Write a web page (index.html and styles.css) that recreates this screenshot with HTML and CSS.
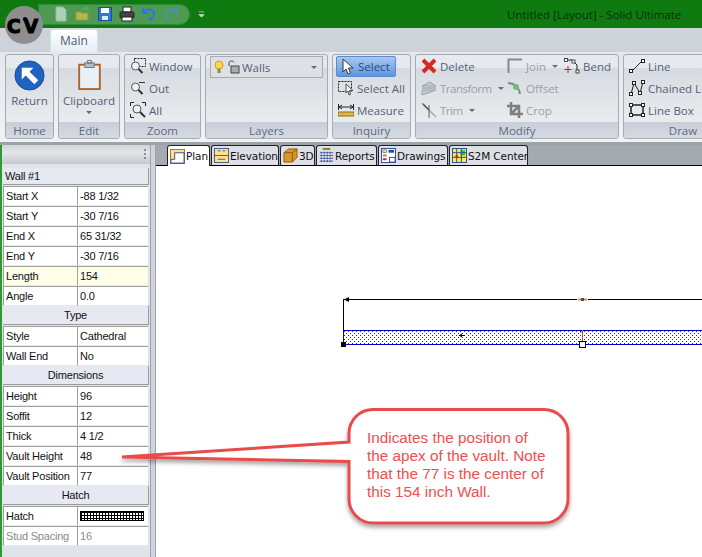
FILE: index.html
```html
<!DOCTYPE html>
<html lang="en">
<head>
    <meta charset="UTF-8">
    <meta name="viewport" content="width=device-width, initial-scale=1.0">
    <title>Untitled [Layout] - Solid Ultimate</title>
    <link rel="stylesheet" href="styles.css">
</head>
<body>
<div class="app">
    <div class="titlebar">
        <div class="logo"><span class="logo-text">CV</span><span class="logo-dot"></span></div>
        <div class="qat">
            <svg class="qat-icon" viewBox="0 0 16 16"><path d="M3 1h7l3 3v11H3z" fill="#a9d3b4" stroke="#8fbf9e"/></svg>
            <svg class="qat-icon" viewBox="0 0 16 16"><path d="M1 14V6h5l1 1h6v7z" fill="#b3b84e" stroke="#8f9a3a"/><path d="M7 5c1-2 3-3 5-3M10 0l3 2-3 2" fill="none" stroke="#4fae5c" stroke-width="1.5"/></svg>
            <svg class="qat-icon" viewBox="0 0 16 16"><rect x="1.500" y="1.500" width="13" height="13" fill="#2c78d8" stroke="#1c4f9c"/><rect x="4" y="2" width="8" height="5" fill="#fff"/><rect x="5" y="10" width="6" height="4" fill="#dfe8f4"/></svg>
            <svg class="qat-icon" viewBox="0 0 16 16"><rect x="4" y="1" width="8" height="5" fill="#fff" stroke="#222"/><rect x="1" y="6" width="14" height="6" rx="1" fill="#444" stroke="#222"/><rect x="3" y="11" width="10" height="4" fill="#fff" stroke="#222"/></svg>
            <svg class="qat-icon" viewBox="0 0 16 16"><path d="M2 2v5h5M3 6c3-4 10-3 10 2 0 3-2 5-5 6" fill="none" stroke="#2a78d8" stroke-width="2.200"/></svg>
            <svg class="qat-icon" viewBox="0 0 16 16"><path d="M14 2v5H9M13 6C10 2 3 3 3 8c0 3 2 5 5 6" fill="none" stroke="#4b93a8" stroke-width="2.200"/></svg>
        </div>
        <svg class="qat-more" viewBox="0 0 8 8"><path d="M1 1h6M1 4h6L4 7z" fill="#cfd6cf" stroke="#cfd6cf" stroke-width=".8"/></svg>
        <div class="title-text">Untitled [Layout] - Solid Ultimate</div>
    </div>

    <div class="tabrow"><div class="main-tab">Main</div></div>

    <div class="ribbon">
        <div class="group group-home">
            <div class="group-body big">
                <svg class="icon-return" viewBox="0 0 32 32"><circle cx="16" cy="16" r="15" fill="#1f63c0" stroke="#174a96"/><path d="M8 8h12l-4 4 9 9-4 4-9-9-4 4z" fill="#fff"/></svg>
                <span>Return</span>
            </div>
            <div class="group-label">Home</div>
        </div>
        <div class="group group-edit">
            <div class="group-body big">
                <svg class="icon-clip" viewBox="0 0 24 32"><rect x="1" y="5" width="22" height="26" fill="#e8f0f8" stroke="#a9652c" stroke-width="2"/><rect x="7" y="3" width="10" height="5" fill="#b5bcc6" stroke="#6c7480"/><rect x="10" y="0.500" width="4" height="3" fill="none" stroke="#6c7480"/></svg>
                <span>Clipboard</span>
                <i class="caret"></i>
            </div>
            <div class="group-label">Edit</div>
        </div>
        <div class="group group-zoom">
            <div class="group-body rows">
                <div class="item"><svg class="ico" viewBox="0 0 16 16"><rect x="4.500" y="0.500" width="11" height="8" fill="none" stroke="#222" stroke-dasharray="2 1"/><circle cx="5.500" cy="8" r="4" fill="#eef2f6" stroke="#555"/><path d="M8.500 11l4 4" stroke="#333" stroke-width="2"/></svg>Window</div>
                <div class="item"><svg class="ico" viewBox="0 0 16 16"><path d="M9 2.500h6" stroke="#333"/><circle cx="5.500" cy="7" r="4" fill="#eef2f6" stroke="#555"/><path d="M8.500 10l4 4" stroke="#333" stroke-width="2"/></svg>Out</div>
                <div class="item"><svg class="ico" viewBox="0 0 16 16"><path d="M.5 4V.5H4M12 .5h3.500V4M.5 12v3.500H4" fill="none" stroke="#222"/><circle cx="7" cy="7" r="4" fill="#eef2f6" stroke="#555"/><path d="M10 10l5 5" stroke="#333" stroke-width="2"/></svg>All</div>
            </div>
            <div class="group-label">Zoom</div>
        </div>
        <div class="group group-layers">
            <div class="group-body">
                <div class="combo">
                    <svg class="ico-bulb" viewBox="0 0 10 14"><circle cx="5" cy="5" r="4" fill="#ffd84a" stroke="#c9a21c"/><rect x="3.500" y="9" width="3" height="4" fill="#8a8a6a"/></svg>
                    <svg class="ico-lock" viewBox="0 0 12 14"><path d="M1 6V2.500C1 .5 6 .5 6 2.500" fill="none" stroke="#444"/><rect x="3" y="6" width="8" height="7" fill="#a8acb2" stroke="#444"/></svg>
                    <span class="combo-text">Walls</span>
                    <i class="caret combo-caret"></i>
                </div>
            </div>
            <div class="group-label">Layers</div>
        </div>
        <div class="group group-inquiry">
            <div class="group-body rows">
                <div class="item item-on"><svg class="ico" viewBox="0 0 16 16"><path d="M4 0v13l3-3 2 5 2.500-1-2-5H14z" fill="#fff" stroke="#333"/></svg>Select</div>
                <div class="item"><svg class="ico" viewBox="0 0 16 16"><rect x=".5" y="1.500" width="13" height="10" fill="none" stroke="#222" stroke-dasharray="2 1"/><path d="M8 4v9l2-2 1 4 1.500-.5-1-4H15z" fill="#eef2f6" stroke="#555"/></svg>Select All</div>
                <div class="item"><svg class="ico" viewBox="0 0 16 16"><path d="M.5 2v6M15.500 2v6M1 5h14M1 5l3-2M1 5l3 2M15 5l-3-2M15 5l-3 2" fill="none" stroke="#222"/><rect y="10" width="16" height="4" fill="#e0b83c" stroke="#8a7020"/></svg>Measure</div>
            </div>
            <div class="group-label">Inquiry</div>
        </div>
        <div class="group group-modify">
            <div class="group-body modify-grid">
                <div class="item"><svg class="ico" viewBox="0 0 16 16"><path d="M2 2l12 12M14 2L2 14" stroke="#d42a22" stroke-width="4"/></svg>Delete</div>
                <div class="item off"><svg class="ico" viewBox="0 0 16 16"><path d="M1.500 15V1.500H15" fill="none" stroke="#8a8a8a" stroke-width="2"/></svg>Join<i class="caret"></i></div>
                <div class="item"><svg class="ico" viewBox="0 0 16 16"><path d="M2 2h6l5 5v7" fill="none" stroke="#222"/><rect x=".5" y=".5" width="3" height="3" fill="#fff" stroke="#222" stroke-width=".8"/><rect x="8" y="2" width="3" height="3" fill="#fff" stroke="#222" stroke-width=".8"/><rect x="12" y="12" width="3" height="3" fill="#fff" stroke="#222" stroke-width=".8"/><path d="M4 8v7M.5 11.500h7" stroke="#d82020"/></svg>Bend</div>
                <div class="item off"><svg class="ico" viewBox="0 0 16 16"><path d="M1 6l8-4 6 4zM1 10h14l-14 5z" fill="#c2cbd6" stroke="#98a2ae"/><path d="M1 8h14" stroke="#888"/></svg><span class="tight">Transform</span><i class="caret"></i></div>
                <div class="item off"><svg class="ico" viewBox="0 0 16 16"><path d="M1 3c6 0 11 4 12 11" fill="none" stroke="#888" stroke-width="2"/><circle cx="9" cy="7" r="3" fill="#6cc06c"/></svg>Offset</div>
                <div></div>
                <div class="item off"><svg class="ico" viewBox="0 0 16 16"><path d="M1 1l14 14" stroke="#a8a8a8" stroke-width="1.500"/><path d="M8 3v13" stroke="#777" stroke-width="1.200"/><path d="M2 2l6 6" stroke="#555" stroke-width="1.500"/></svg><span class="tight">Trim</span><i class="caret"></i></div>
                <div class="item off"><svg class="ico" viewBox="0 0 16 16"><path d="M4 0v12h12M0 4h12v12M4 12l8-8" fill="none" stroke="#808080" stroke-width="2.500"/></svg>Crop</div>
                <div></div>
            </div>
            <div class="group-label">Modify</div>
        </div>
        <div class="group group-draw">
            <div class="group-body rows">
                <div class="item"><svg class="ico" viewBox="0 0 16 16"><path d="M2 14L14 2" stroke="#222"/><rect x=".5" y="11.500" width="3" height="3" fill="#fff" stroke="#222"/><rect x="12.500" y="1.500" width="3" height="3" fill="#fff" stroke="#222"/></svg>Line</div>
                <div class="item"><svg class="ico" viewBox="0 0 16 16"><path d="M2 14L5 3l6 10 3-11" fill="none" stroke="#222"/><rect x=".5" y="12.500" width="3" height="3" fill="#fff" stroke="#222"/><rect x="3.500" y="1.500" width="3" height="3" fill="#fff" stroke="#222"/><rect x="9.500" y="11.500" width="3" height="3" fill="#fff" stroke="#222"/><rect x="12.500" y=".5" width="3" height="3" fill="#fff" stroke="#222"/></svg>Chained Line</div>
                <div class="item"><svg class="ico" viewBox="0 0 16 16"><rect x="2" y="3" width="12" height="10" fill="none" stroke="#222" stroke-width="1.500"/><rect x=".5" y="1.500" width="3" height="3" fill="#fff" stroke="#222"/><rect x="12.500" y="1.500" width="3" height="3" fill="#fff" stroke="#222"/><rect x=".5" y="11.500" width="3" height="3" fill="#fff" stroke="#222"/><rect x="12.500" y="11.500" width="3" height="3" fill="#fff" stroke="#222"/></svg>Line Box</div>
            </div>
            <div class="group-label">Draw</div>
        </div>
    </div>

    <div class="workspace">
        <div class="sidepanel">
            <div class="panel-head"><span class="grip"></span></div>
            <div class="props">
                <div class="prop-head left">Wall #1</div>
                <div class="prop"><div>Start X</div><div>-88 1/32</div></div>
                <div class="prop"><div>Start Y</div><div>-30 7/16</div></div>
                <div class="prop"><div>End X</div><div>65 31/32</div></div>
                <div class="prop"><div>End Y</div><div>-30 7/16</div></div>
                <div class="prop hilite"><div>Length</div><div>154</div></div>
                <div class="prop"><div>Angle</div><div>0.0</div></div>
                <div class="prop-head">Type</div>
                <div class="prop"><div>Style</div><div>Cathedral</div></div>
                <div class="prop"><div>Wall End</div><div>No</div></div>
                <div class="prop-head">Dimensions</div>
                <div class="prop"><div>Height</div><div>96</div></div>
                <div class="prop"><div>Soffit</div><div>12</div></div>
                <div class="prop"><div>Thick</div><div>4 1/2</div></div>
                <div class="prop"><div>Vault Height</div><div>48</div></div>
                <div class="prop"><div>Vault Position</div><div>77</div></div>
                <div class="prop-head">Hatch</div>
                <div class="prop"><div>Hatch</div><div><span class="hatch"></span></div></div>
                <div class="prop muted"><div>Stud Spacing</div><div>16</div></div>
            </div>
        </div>
        <div class="splitter"></div>
        <div class="docarea">
            <div class="doctabs">
                <div class="doctab active tab-plan"><svg class="tab-ico" viewBox="0 0 16 16"><rect x=".5" y=".5" width="15" height="15" fill="#ffe08a" stroke="#8a7a30"/><path d="M1 11h4V4h10v11H1z" fill="#fff" stroke="#2a4a9a"/></svg>Plan</div>
                <div class="doctab tab-elev"><svg class="tab-ico" viewBox="0 0 16 16"><rect x=".5" y=".5" width="15" height="15" fill="#ffe08a" stroke="#405a90"/><path d="M0 8h16M4 3h3M9 3h3M4 12h8" stroke="#405a90"/></svg>Elevation</div>
                <div class="doctab tab-3d"><svg class="tab-ico" viewBox="0 0 16 16"><path d="M1 5l5-4h9v9l-5 5H1z" fill="#d9962a" stroke="#8a5a10"/><path d="M1 5h9v10M10 5l5-4" fill="none" stroke="#8a5a10"/></svg>3D</div>
                <div class="doctab tab-rep"><svg class="tab-ico" viewBox="0 0 16 16"><path d="M4 1h8" stroke="#8a7a30" stroke-width="2"/><path d="M1 5h14M1 8h14M1 11h14M1 14h14M3 4v11M6 4v11M9 4v11M12 4v11" stroke="#2a4a9a" stroke-dasharray="2 1"/></svg>Reports</div>
                <div class="doctab tab-draw"><svg class="tab-ico" viewBox="0 0 16 16"><rect x=".5" y=".5" width="15" height="15" fill="#fff" stroke="#2a4a9a"/><rect x="2" y="2" width="4" height="3" fill="#ffe08a" stroke="#444" stroke-width=".6"/><rect x="2" y="7" width="4" height="2" fill="#888"/><rect x="2" y="11" width="4" height="2" fill="#d82020"/><rect x="8" y="2" width="6" height="3" fill="#2a4a9a"/><rect x="9" y="10" width="6" height="5" fill="#fff" stroke="#2a4a9a"/></svg>Drawings</div>
                <div class="doctab tab-s2m"><svg class="tab-ico" viewBox="0 0 16 16"><rect x=".5" y=".5" width="15" height="15" fill="#ffe84a" stroke="#2a4a9a"/><rect x="9" y="2" width="5" height="6" fill="#30d040"/><path d="M0 5h16M0 10h16M5 0v16M10 0v16" stroke="#2a4a9a"/><circle cx="5" cy="9" r="1.500" fill="#d82020"/></svg>S2M Center</div>
            </div>
            <div class="canvas">
                <svg class="wall" width="362" height="60" viewBox="0 0 362 60">
                    <defs>
                        <pattern id="dots" width="4" height="4" patternUnits="userSpaceOnUse">
                            <rect x="0" y="0" width="1" height="1" fill="#2030a0"/>
                            <rect x="2" y="2" width="1" height="1" fill="#2030a0"/>
                        </pattern>
                    </defs>
                    <rect x="3" y="35" width="359" height="14" fill="url(#dots)"/>
                    <path d="M3.500 4.500H362" stroke="#000"/>
                    <path d="M3.500 4V35" stroke="#000"/>
                    <path d="M3.500 35V49M3 35.500H362M3 49.500H362" stroke="#0000d0" fill="none"/>
                    <path d="M9 2L4 4.500 9 7z" fill="#000"/>
                    <rect x="237" y="2" width="11" height="5" fill="#fff"/>
                    <path d="M238 4.500h3M244 4.500h3" stroke="#d89040" stroke-width="2"/>
                    <path d="M241 4.500h3" stroke="#405070" stroke-width="3"/>
                    <path d="M119 40.500h6" stroke="#000"/>
                    <path d="M122 38.500l-3 2 3 2z" fill="#000"/>
                    <path d="M242.500 35v11M240 38l2.500-2" stroke="#a05a30" fill="none"/>
                    <rect x="239.500" y="46.500" width="6" height="6" fill="#fff" stroke="#000"/>
                    <rect x="1" y="47" width="5" height="5" fill="#000"/>
                </svg>
            </div>
        </div>
    </div>

    <svg class="callout-shape" width="702" height="557" viewBox="0 0 702 557">
        <defs>
            <filter id="shadow" x="-10%" y="-10%" width="120%" height="125%">
                <feDropShadow dx="0" dy="3" stdDeviation="2" flood-color="#000" flood-opacity=".35"/>
            </filter>
        </defs>
        <path d="M373 409.500H544a24 24 0 0 1 24 24V499a24 24 0 0 1-24 24H373a24 24 0 0 1-24-24V461.500L122 457l227-15V433.500a24 24 0 0 1 24-24z" fill="#fff" stroke="#e94b4b" stroke-width="3" filter="url(#shadow)"/>
    </svg>
    <div class="callout-text">Indicates the position of<br>the apex of the vault. Note<br>that the 77 is the center of<br>this 154 inch Wall.</div>
</div>
</body>
</html>
```
FILE: styles.css
```css
html, body {
    margin: 0;
    padding: 0;
}

body {
    font-family: "Open Sans", "Noto Sans", sans-serif;
    font-size: 11px;
    width: 702px;
    height: 557px;
    overflow: hidden;
    background-color: #ced3da;
}

.app {
    position: relative;
    display: flex;
    flex-direction: column;
    width: 702px;
    height: 557px;
    overflow: hidden;
}

.titlebar {
    position: relative;
    display: flex;
    align-items: center;
    flex: none;
    height: 28px;
    background-color: #0f7a10;
}

.logo {
    position: absolute;
    left: 5px;
    top: 6px;
    width: 38px;
    height: 38px;
    border-radius: 50%;
    background-color: #8e8e8e;
    z-index: 2;
    text-align: center;
}

.logo-text {
    font-family: "DejaVu Sans", sans-serif;
    font-weight: bold;
    font-size: 19px;
    line-height: 40px;
    letter-spacing: 3px;
    color: #000;
    -webkit-text-stroke: 1px #000;
}

.logo-dot {
    position: absolute;
    left: 18px;
    top: 11px;
    width: 4px;
    height: 4px;
    border-radius: 50%;
    background-color: #000;
}

.qat {
    display: flex;
    align-items: center;
    gap: 6px;
    margin-left: 38px;
    height: 21px;
    width: 152px;
    padding-left: 14px;
    box-sizing: border-box;
    background-color: #4e9a55;
    border: 1px solid #2f8a36;
    border-radius: 0 12px 12px 0;
}

.qat-icon {
    width: 16px;
    height: 16px;
    flex: none;
}

.qat-more {
    width: 7px;
    height: 7px;
    margin-left: 8px;
}

.title-text {
    position: absolute;
    left: 507px;
    top: 6px;
    font-size: 11.500px;
    line-height: 17px;
    color: #08300a;
}

.tabrow {
    flex: none;
    height: 24px;
    padding-left: 50px;
    background-color: #ced3da;
}

.main-tab {
    width: 48px;
    height: 23px;
    margin-top: 1px;
    box-sizing: border-box;
    text-align: center;
    font-size: 12px;
    line-height: 22px;
    color: #4a5a7c;
    background: linear-gradient(#ffffff, #e4eef2);
    border: 1px solid #c4e4ea;
    border-bottom: none;
    border-radius: 3px 3px 0 0;
}

.ribbon {
    display: flex;
    flex: none;
    gap: 4px;
    height: 93px;
    padding: 2px 0 0 5px;
    box-sizing: border-box;
    background: linear-gradient(#e4e8ed, #f0f2f4);
    border-bottom: 3px solid #9ea3a9;
}

.group {
    display: flex;
    flex-direction: column;
    flex: none;
    height: 85px;
    box-sizing: border-box;
    border: 1px solid #a6abb3;
    border-radius: 3px;
    background: linear-gradient(#e6e9ed 0, #e6e9ed 15%, #d6dbe1 16%, #eff1f2 100%);
}

.group-home { width: 49px; }
.group-edit { width: 62px; }
.group-zoom { width: 77px; }
.group-layers { width: 123px; }
.group-inquiry { width: 79px; }
.group-modify { width: 204px; }
.group-draw { width: 120px; }

.group-body {
    flex: 1;
    min-height: 0;
    color: #54607a;
}

.group-label {
    flex: none;
    height: 16px;
    text-align: center;
    font-size: 11.500px;
    line-height: 17px;
    color: #5e6a80;
    background: linear-gradient(#c8ced8, #d6dae2);
    border-radius: 0 0 3px 3px;
}

.big {
    display: flex;
    flex-direction: column;
    align-items: center;
    padding-top: 5px;
    font-size: 11.500px;
    line-height: 15px;
}

.icon-return {
    width: 31px;
    height: 31px;
    margin-bottom: 2px;
}

.icon-clip {
    width: 23px;
    height: 30px;
    margin-bottom: 3px;
}

.caret {
    display: inline-block;
    width: 0;
    height: 0;
    margin: 1px 0 0 6px;
    border: 3px solid transparent;
    border-top: 3px solid #666c78;
    border-bottom: none;
}

.big .caret {
    margin: 3px 0 0;
}

.rows {
    padding: 0 0 0 5px;
}

.item {
    display: flex;
    align-items: center;
    height: 22px;
    font-size: 11.500px;
    white-space: nowrap;
    color: #54607a;
}

.ico {
    width: 16px;
    height: 16px;
    flex: none;
    margin-right: 3px;
}

.off {
    color: #9aa0aa;
}

.tight {
    letter-spacing: -.5px;
}

.item-on {
    margin: 1px 14px 0 -2px;
    padding-left: 2px;
    height: 21px;
    box-sizing: border-box;
    border: 1px solid #5a8ad0;
    border-radius: 2px;
    color: #2a4a80;
    background: linear-gradient(#a8c8f0, #5f95e0);
}

.combo {
    display: flex;
    align-items: center;
    height: 22px;
    margin: 1px 4px 0 4px;
    padding: 0 5px 0 3px;
    box-sizing: border-box;
    border: 1px solid #a6abb3;
    background-color: #dde1e6;
}

.ico-bulb {
    width: 10px;
    height: 14px;
    margin-right: 4px;
}

.ico-lock {
    width: 12px;
    height: 14px;
    margin-right: 2px;
}

.combo-text {
    flex: 1;
    font-size: 11.500px;
}

.combo-caret {
    margin: 1px 0 0;
}

.modify-grid {
    display: grid;
    grid-template-columns: 86px 57px 1fr;
    grid-auto-rows: 22px;
    padding: 0 0 0 5px;
}

.workspace {
    display: flex;
    flex: 1;
    min-height: 0;
}

.sidepanel {
    flex: none;
    width: 150px;
    box-sizing: border-box;
    border-left: 2px solid #2f9a34;
    background-color: #dfe3ea;
}

.panel-head {
    display: flex;
    justify-content: flex-end;
    height: 19px;
    padding-right: 4px;
    box-sizing: border-box;
    background: linear-gradient(#d0d4d8, #e4e6e8 40%, #c4c8ce);
    margin-bottom: 2px;
}

.grip {
    width: 2px;
    height: 11px;
    margin-top: 4px;
    background: repeating-linear-gradient(#8a8f96 0, #8a8f96 2px, transparent 2px, transparent 4px);
}

.props {
    display: flex;
    flex-direction: column;
    padding-left: 1px;
    font-family: "Liberation Sans", Arial, sans-serif;
    font-size: 11px;
    letter-spacing: -.2px;
    color: #111;
}

.prop-head {
    height: 19px;
    margin-bottom: 1px;
    margin-right: 1px;
    box-sizing: border-box;
    text-align: center;
    line-height: 19px;
    background-color: #e6e9f1;
    border-right: 1px solid #9a9a9a;
    border-bottom: 1px solid #9a9a9a;
}

.prop-head.left {
    height: 17px;
    margin-top: 2px;
    line-height: 17px;
    text-align: left;
    padding-left: 2px;
}

.prop {
    display: grid;
    grid-template-columns: 74px 71px;
    height: 20px;
    box-sizing: border-box;
}

.prop > div {
    box-sizing: border-box;
    height: 20px;
    padding-left: 2px;
    line-height: 18px;
    background-color: #fff;
    border-top: 1px solid #a0a0a0;
    border-left: 1px solid #a0a0a0;
    border-bottom: 1px solid #e6e9f1;
}

.hilite > div {
    background-color: #fefee8;
}

.muted > div {
    color: #8a8a8a;
}

.hatch {
    display: block;
    width: 62px;
    height: 8px;
    margin-top: 4px;
    border: 1px solid #000;
    background-color: #fff;
    background-image: linear-gradient(90deg, #000 1px, transparent 1px), linear-gradient(#000 1px, transparent 1px);
    background-size: 3px 3px;
}

.splitter {
    flex: none;
    width: 6px;
    box-sizing: border-box;
    background-color: #ced3dc;
    border-left: 1px solid #9ea3a9;
    border-right: 1px solid #9ea3a9;
}

.docarea {
    display: flex;
    flex-direction: column;
    flex: 1;
    min-width: 0;
}

.doctabs {
    display: flex;
    flex: none;
    height: 21px;
    padding-left: 11px;
    box-sizing: border-box;
    background-color: #a4aab0;
    border-bottom: 1px solid #000;
}

.doctab {
    display: flex;
    align-items: center;
    flex: none;
    height: 20px;
    box-sizing: border-box;
    margin-right: 1px;
    padding-left: 2px;
    font-family: "DejaVu Sans", sans-serif;
    font-size: 10.500px;
    letter-spacing: -.1px;
    white-space: nowrap;
    color: #111;
    background-color: #dde0e6;
    border: 1px solid #222;
    border-bottom: none;
    border-radius: 3px 3px 0 0;
}

.doctab.active {
    height: 21px;
    background-color: #fff;
}

.tab-ico {
    width: 15px;
    height: 15px;
    flex: none;
    margin-right: 1px;
}

.tab-plan { width: 43px; }
.tab-elev { width: 68px; }
.tab-3d { width: 35px; }
.tab-rep { width: 61px; }
.tab-draw { width: 70px; }
.tab-s2m { width: 79px; }

.canvas {
    position: relative;
    flex: 1;
    background-color: #fff;
}

.wall {
    position: absolute;
    left: 184px;
    top: 129px;
}

.callout-shape {
    position: absolute;
    left: 0;
    top: 0;
    pointer-events: none;
}

.callout-text {
    position: absolute;
    left: 367px;
    top: 429px;
    font-family: "Liberation Sans", Arial, sans-serif;
    font-size: 15.300px;
    line-height: 18px;
    color: #ef4f50;
}
```
